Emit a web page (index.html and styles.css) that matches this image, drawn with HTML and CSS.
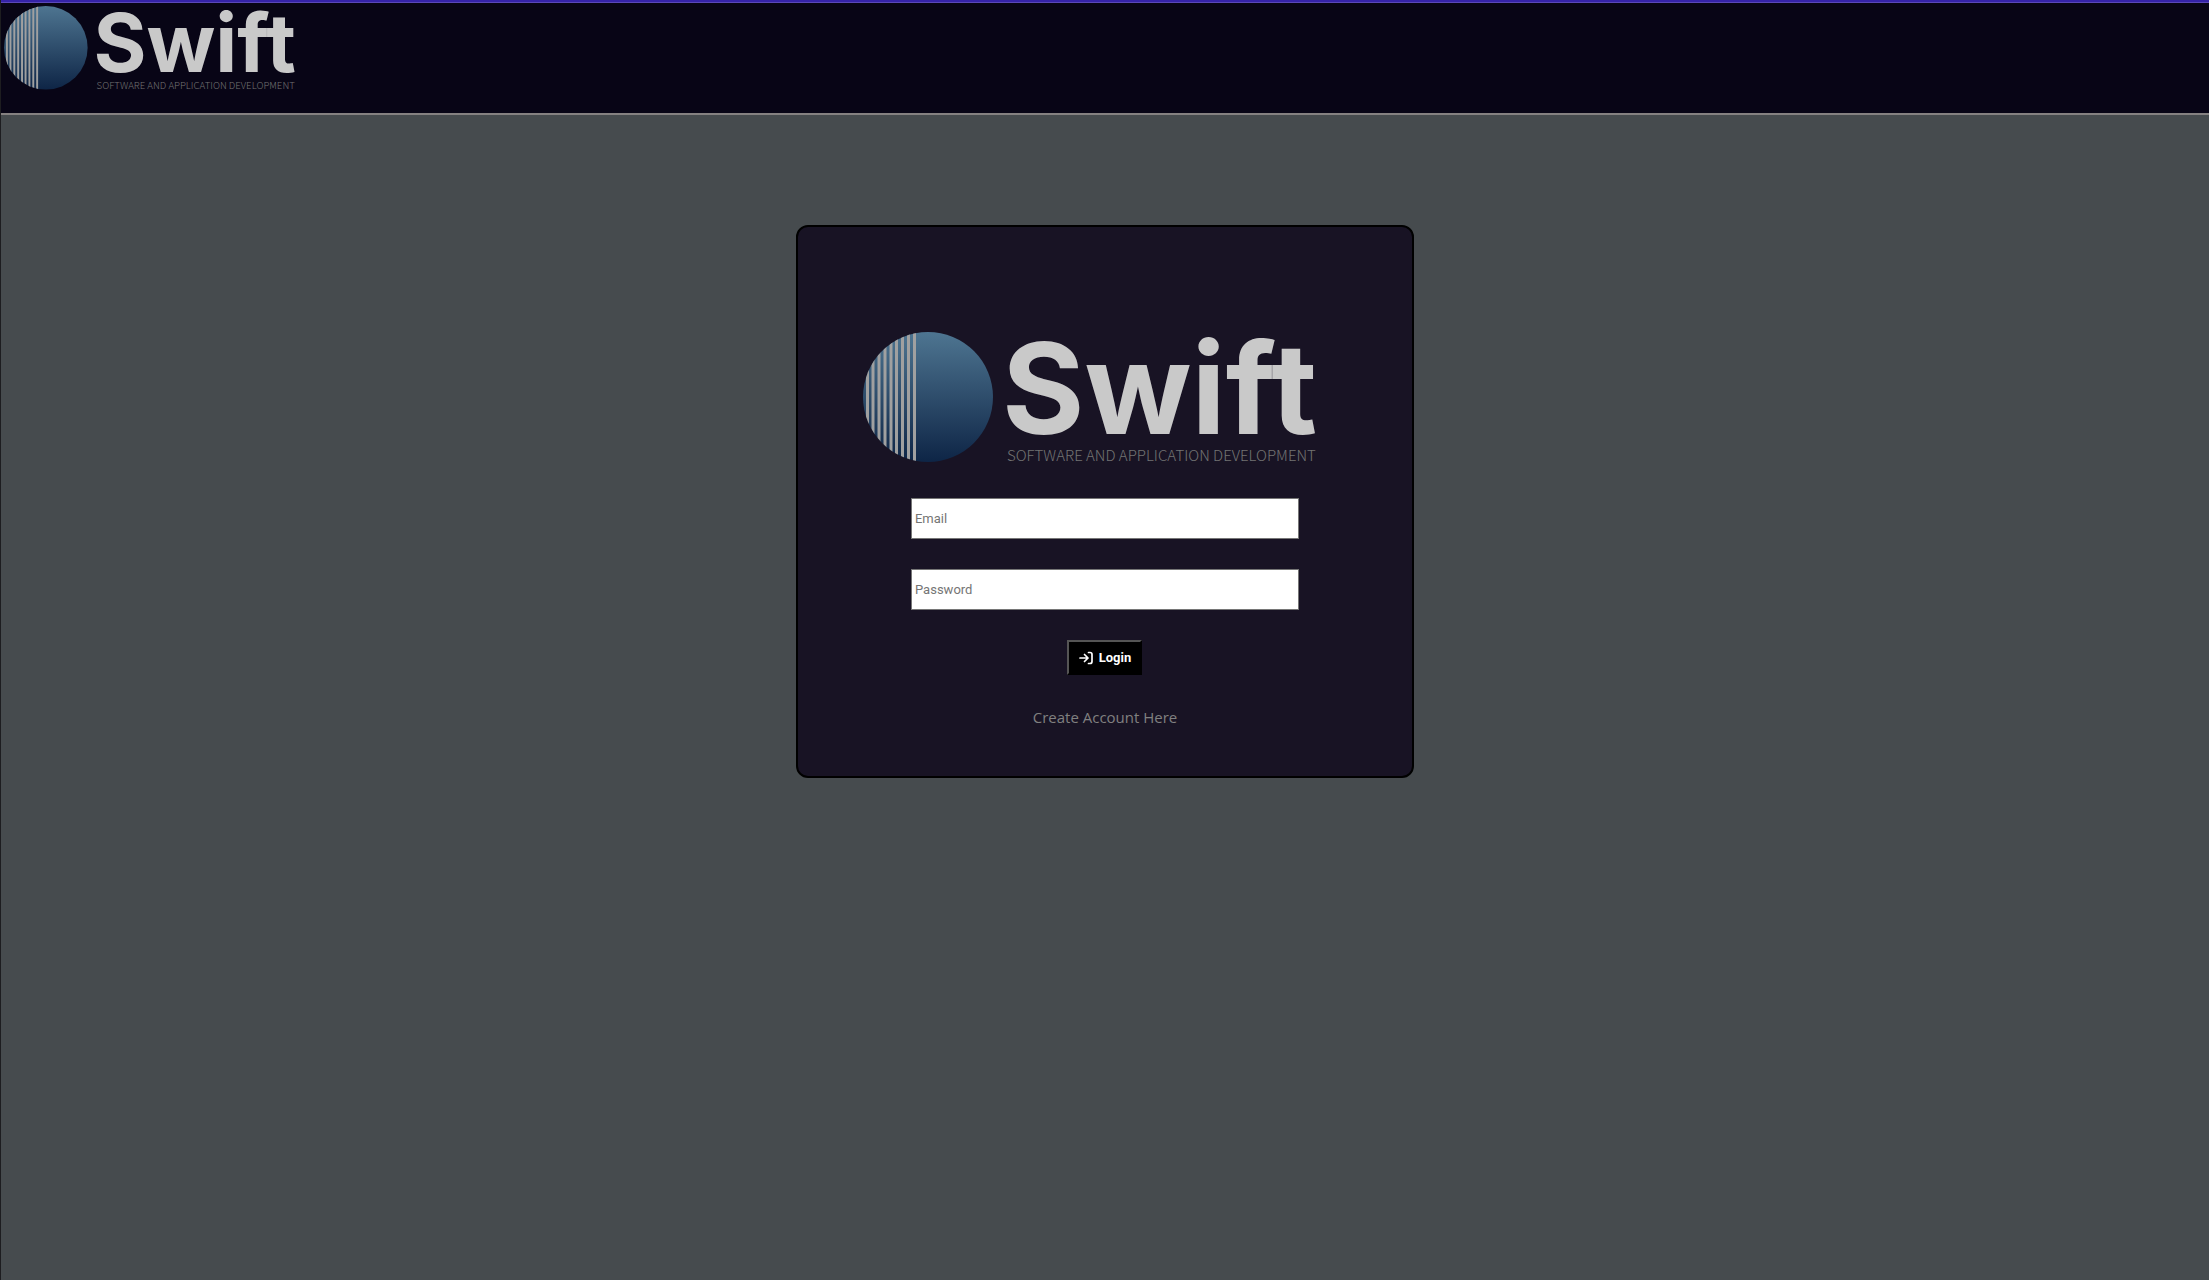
FILE: index.html
```html
<!DOCTYPE html>
<html lang="en">
<head>
<meta charset="utf-8">
<title>Swift - Login</title>
<link rel="stylesheet" href="styles.css">
</head>
<body>
<svg class="defs" width="0" height="0" aria-hidden="true">
  <defs>
    <linearGradient id="globe" x1="0" y1="0" x2="0" y2="1">
      <stop offset="0" stop-color="#4e7591"/>
      <stop offset="1" stop-color="#0e2546"/>
    </linearGradient>
    <clipPath id="disc"><circle cx="65" cy="65" r="65"/></clipPath>
    <symbol id="logo" viewBox="0 0 454 134" overflow="visible">
      <circle cx="65" cy="65" r="65" fill="url(#globe)"/>
      <path clip-path="url(#disc)" fill="#a0a0a0" d="M50 0h3v130h-3zM44 0h3v130h-3zM38 0h3v130h-3zM32 0h3v130h-3zM26.500 0h3v130h-3zM20.500 0h3v130h-3zM14.500 0h3v130h-3zM8.500 0h3v130h-3zM3 0h3v130h-3z"/>
      <text class="logo-name" x="139" y="102">Swift</text>
      <text class="logo-tag" x="144" y="129">SOFTWARE AND APPLICATION DEVELOPMENT</text>
    </symbol>
  </defs>
</svg>
<header class="topbar">
  <svg class="topbar-logo" viewBox="0 0 454 134" role="img" aria-label="Swift"><use href="#logo"/></svg>
</header>
<main class="page">
  <form class="card">
    <svg class="card-logo" viewBox="0 0 454 134" role="img" aria-label="Swift"><use href="#logo"/></svg>
    <input class="field" type="email" placeholder="Email" aria-label="Email">
    <input class="field" type="password" placeholder="Password" aria-label="Password">
    <button class="login" type="button">
      <svg class="login-icon" viewBox="0 0 14 14" aria-hidden="true"><path d="M1 7h8M5.500 3.500L9 7l-3.500 3.500M9.500 1.500H11a2 2 0 0 1 2 2v7a2 2 0 0 1-2 2H9.500"/></svg>
      Login
    </button>
    <a class="create" href="#">Create Account Here</a>
  </form>
</main>
</body>
</html>
```
FILE: styles.css
```css
* {
  box-sizing: border-box;
}

body {
  margin: 0;
  min-height: 100vh;
  border-left: 1px solid #1d1d20;
  background: #464b4e;
  font-family: "Open Sans", sans-serif;
}

.defs {
  position: absolute;
}

.topbar {
  height: 115px;
  padding: 3px;
  border-top: 2px solid #3523a8;
  border-bottom: 2px solid #858181;
  background: #080516;
  box-shadow: inset 0 1px #5b48b8;
}

.topbar-logo {
  display: block;
  width: 292px;
  margin-top: 1px;
  overflow: visible;
}

.logo-name {
  font: 700 126px Inter, sans-serif;
  fill: #c9c9c9;
}

.logo-tag {
  font: 300 15px "Noto Sans CJK SC", sans-serif;
  fill: #737373;
}

.page {
  display: flex;
  justify-content: center;
  padding-top: 110px;
}

.card {
  display: flex;
  flex-direction: column;
  align-items: center;
  gap: 30px;
  width: 28%;
  padding: 105px 0 47px;
  border: 2px solid #000;
  border-radius: 12px;
  background: #181324;
}

.card-logo {
  align-self: flex-start;
  width: 454px;
  margin-left: 65px;
  margin-bottom: 2px;
  overflow: visible;
}

.field {
  width: 388px;
  height: 41px;
  padding: 1px 3px;
  border: 1px solid #767676;
  background: #fff;
  font: 13px Roboto, sans-serif;
}

.field::placeholder {
  color: #757575;
}

.login {
  display: flex;
  align-items: center;
  justify-content: center;
  gap: 6px;
  width: 75px;
  height: 35px;
  padding: 0;
  border: 2px solid;
  border-color: #555 #000 #000 #555;
  background: #000;
  color: #fff;
  font: 700 13px Roboto, sans-serif;
}

.login-icon {
  width: 14px;
  height: 14px;
  fill: none;
  stroke: #fff;
  stroke-width: 1.7;
  stroke-linecap: round;
  stroke-linejoin: round;
}

.create {
  color: #808080;
  font-size: 15px;
  line-height: 24px;
  text-decoration: none;
}
```
